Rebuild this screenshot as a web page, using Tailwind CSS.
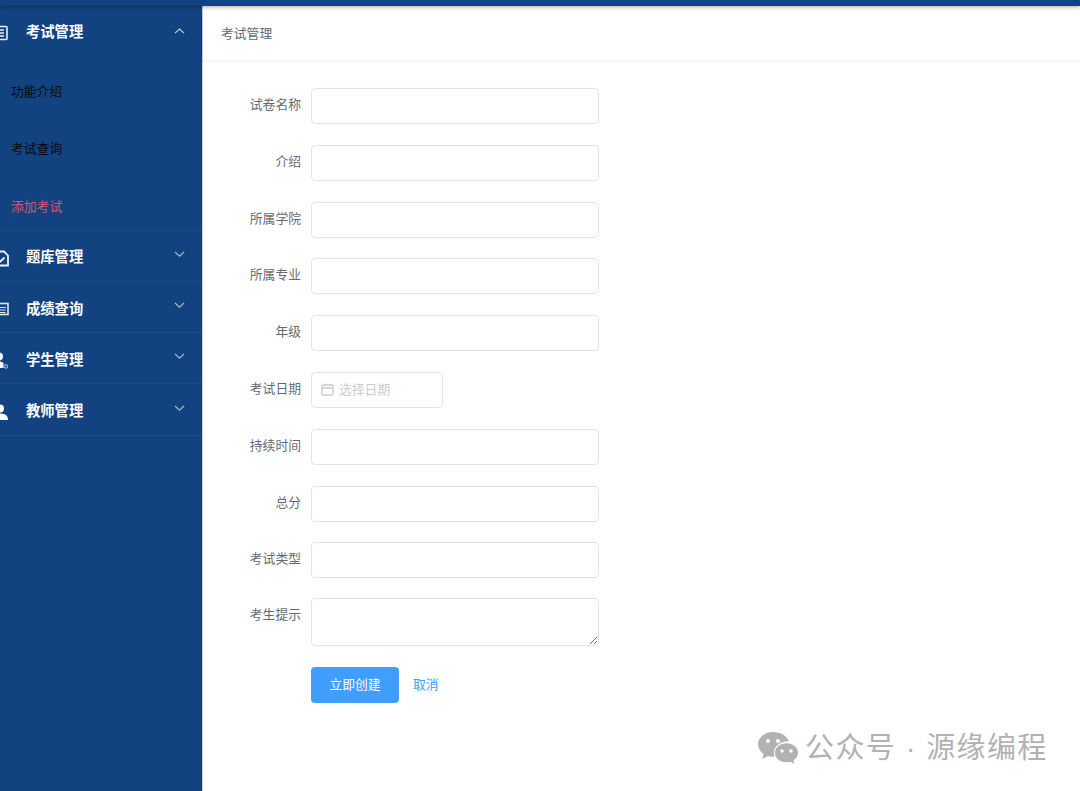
<!DOCTYPE html>
<html>

<head>
    <meta charset="utf-8" />
    <title>考试管理</title>
    <script src="https://cdn.jsdelivr.net/npm/@tailwindcss/browser@4"></script>
</head>

<body class="h-[791px] w-[1080px] overflow-hidden bg-white font-['Liberation_Sans','Noto_Sans_CJK_SC',sans-serif]">
    <!-- top bar, only its bottom edge is in the picture -->
    <div class="relative z-10 h-[6px] bg-[#12427f] shadow-[0_1px_4px_rgba(0,0,0,0.35)]"></div>

    <div class="flex h-[785px]">
        <!-- sidebar -->
        <aside class="w-[203px] shrink-0 overflow-hidden border-r border-[#c4cad3] bg-[#12427f] text-[14.3px] font-bold text-white">
            <div class="border-b border-[#174a8a]">
                <div class="flex h-[51px] items-center pt-[2px]">
                    <svg class="ml-[-8px] mr-[18px] h-4 w-4" viewBox="0 0 16 16" fill="none" stroke="#e8eef6" stroke-width="1.6">
                        <rect x="2" y="1.500" width="13" height="13" rx="1" />
                        <path d="M5 5h7M5 8h7M5 11h7" />
                    </svg>
                    <span>考试管理</span>
                    <svg class="ml-auto mr-[17px] h-[6px] w-[11px] -translate-y-[2px]" viewBox="0 0 11 6" fill="none" stroke="#c3cfdf" stroke-width="1.1">
                        <path d="M1 5.200 5.500 1 10 5.200" />
                    </svg>
                </div>
                <ul class="flex flex-col gap-[37.5px] pb-[13px] pl-[11px] pt-[24.5px] text-[12.8px] font-normal leading-5 text-[#050b14]">
                    <li>功能介绍</li>
                    <li>考试查询</li>
                    <li class="text-[#d9546f]">添加考试</li>
                </ul>
            </div>

            <div class="flex h-[51.3px] items-center border-b border-[#174a8a] pt-[5px]">
                <svg class="ml-[-7px] mr-[17px] h-[17px] w-4" viewBox="0 0 16 17" fill="none" stroke="#f0f4f9" stroke-width="1.8">
                    <path d="M2 1.500h9l4 4v10H2z" />
                    <path d="M5.500 9.500 7.500 11.500 11.500 7.500" />
                </svg>
                <span>题库管理</span>
                <svg class="ml-auto mr-[17px] h-[6px] w-[11px] -translate-y-1" viewBox="0 0 11 6" fill="none" stroke="#a9bad0" stroke-width="1.1">
                    <path d="M1 1 5.500 5.200 10 1" />
                </svg>
            </div>
            <div class="flex h-[51.3px] items-center border-b border-[#174a8a] pt-[5px]">
                <svg class="ml-[-7px] mr-[17px] h-4 w-4" viewBox="0 0 16 16" fill="none" stroke="#dfe7f1" stroke-width="1.6">
                    <rect x="1.500" y="2.500" width="13.500" height="11" />
                    <path d="M1 6.500h12M4 9h8.500M4 11.500h8.500" stroke-width="1" />
                </svg>
                <span>成绩查询</span>
                <svg class="ml-auto mr-[17px] h-[6px] w-[11px] -translate-y-1" viewBox="0 0 11 6" fill="none" stroke="#a9bad0" stroke-width="1.1">
                    <path d="M1 1 5.500 5.200 10 1" />
                </svg>
            </div>
            <div class="flex h-[51.3px] items-center border-b border-[#174a8a] pt-[4px]">
                <svg class="ml-[-8px] mr-[18px] h-[17px] w-4" viewBox="0 0 16 17" fill="#f2f5f9">
                    <circle cx="7" cy="4.500" r="4" />
                    <path d="M1 16c0-4.500 2.500-6.500 6-6.500 2 0 3.500.6 4.500 1.800V16z" />
                    <circle cx="14" cy="14.500" r="1.700" fill="none" stroke="#c9d5e4" stroke-width="1" />
                </svg>
                <span>学生管理</span>
                <svg class="ml-auto mr-[17px] h-[6px] w-[11px] -translate-y-1" viewBox="0 0 11 6" fill="none" stroke="#a9bad0" stroke-width="1.1">
                    <path d="M1 1 5.500 5.200 10 1" />
                </svg>
            </div>
            <div class="flex h-[51.3px] items-center border-b border-[#174a8a] pt-[5px]">
                <svg class="ml-[-8px] mr-[18px] h-4 w-4" viewBox="0 0 16 16" fill="#ffffff">
                    <circle cx="8" cy="4.500" r="4" />
                    <path d="M0 16c0-4.500 3-6.500 8-6.500s8 2 8 6.500z" />
                </svg>
                <span>教师管理</span>
                <svg class="ml-auto mr-[17px] h-[6px] w-[11px] -translate-y-1" viewBox="0 0 11 6" fill="none" stroke="#a9bad0" stroke-width="1.1">
                    <path d="M1 1 5.500 5.200 10 1" />
                </svg>
            </div>
        </aside>

        <!-- main content -->
        <main class="relative flex-1">
            <header class="flex h-[54px] items-center pl-[18px] pt-[2px] text-[12.8px] text-[#666a70] shadow-[0_1px_3px_rgba(0,0,0,0.07)]">
                考试管理
            </header>

            <form class="flex flex-col gap-[20.75px] pt-[28px] text-[12.8px] text-[#666a70]">
                <div class="flex h-9">
                    <label class="w-[98px] pt-[7px] text-right leading-5">试卷名称</label>
                    <input type="text" class="ml-[10px] h-9 w-[288px] rounded border border-[#e0e3e9] bg-white" />
                </div>
                <div class="flex h-9">
                    <label class="w-[98px] pt-[7px] text-right leading-5">介绍</label>
                    <input type="text" class="ml-[10px] h-9 w-[288px] rounded border border-[#e0e3e9] bg-white" />
                </div>
                <div class="flex h-9">
                    <label class="w-[98px] pt-[7px] text-right leading-5">所属学院</label>
                    <input type="text" class="ml-[10px] h-9 w-[288px] rounded border border-[#e0e3e9] bg-white" />
                </div>
                <div class="flex h-9">
                    <label class="w-[98px] pt-[7px] text-right leading-5">所属专业</label>
                    <input type="text" class="ml-[10px] h-9 w-[288px] rounded border border-[#e0e3e9] bg-white" />
                </div>
                <div class="flex h-9">
                    <label class="w-[98px] pt-[7px] text-right leading-5">年级</label>
                    <input type="text" class="ml-[10px] h-9 w-[288px] rounded border border-[#e0e3e9] bg-white" />
                </div>
                <div class="flex h-9">
                    <label class="w-[98px] pt-[7px] text-right leading-5">考试日期</label>
                    <div class="ml-[10px] flex h-9 w-[132px] items-center rounded border border-[#e0e3e9] bg-white pl-[9px] text-[#c8ccd4]">
                        <svg class="mr-[5px] h-[13px] w-[13px]" viewBox="0 0 13 13" fill="none" stroke="#c8ccd4" stroke-width="1.400">
                            <rect x="1" y="2" width="11" height="10" rx="1" />
                            <path d="M1 5h11M4 .5v2.500M9 .5v2.500" />
                        </svg>
                        选择日期
                    </div>
                </div>
                <div class="flex h-9">
                    <label class="w-[98px] pt-[7px] text-right leading-5">持续时间</label>
                    <input type="text" class="ml-[10px] h-9 w-[288px] rounded border border-[#e0e3e9] bg-white" />
                </div>
                <div class="mt-px mb-[-1px] flex h-9">
                    <label class="w-[98px] pt-[7px] text-right leading-5">总分</label>
                    <input type="text" class="ml-[10px] h-9 w-[288px] rounded border border-[#e0e3e9] bg-white" />
                </div>
                <div class="flex h-9">
                    <label class="w-[98px] pt-[7px] text-right leading-5">考试类型</label>
                    <input type="text" class="ml-[10px] h-9 w-[288px] rounded border border-[#e0e3e9] bg-white" />
                </div>
                <div class="mt-[-1px] flex h-[48px]">
                    <label class="w-[98px] pt-[7px] text-right leading-5">考生提示</label>
                    <textarea class="ml-[10px] h-[48px] w-[288px] rounded border border-[#e0e3e9] bg-white"></textarea>
                </div>
                <div class="flex h-9 items-center pl-[108px]">
                    <button type="button" class="h-9 w-[88px] rounded bg-[#409eff] text-white">立即创建</button>
                    <a class="ml-[14px] text-[#409eff]">取消</a>
                </div>
            </form>

            <!-- watermark sits over the page -->
            <div class="absolute left-[554px] top-[725px] flex items-center text-[#b2b2b2]">
                <svg class="h-[34px] w-[42px]" viewBox="0 0 42 34">
                    <path fill="#b2b2b2" d="M16 1C7.700 1 1 6.500 1 13.300c0 3.900 2.200 7.300 5.600 9.600L5.200 28l5.700-3c1.600.5 3.300.8 5.100.8.500 0 1 0 1.500-.1-.4-1.200-.6-2.400-.6-3.700 0-6.500 6.300-11.700 14-11.700h1C30 4.700 23.600 1 16 1z" />
                    <path fill="#b2b2b2" d="M41.500 21.800c0-5.500-5.500-10-12-10s-12 4.500-12 10 5.500 10 12 10c1.400 0 2.700-.2 4-.6l4.600 2.500-1.200-4.200c2.800-1.900 4.600-4.600 4.600-7.700z" stroke="#ffffff" stroke-width="1" />
                    <circle cx="11" cy="10" r="2" fill="#ffffff" />
                    <circle cx="21" cy="10" r="2" fill="#ffffff" />
                    <circle cx="25" cy="20" r="1.700" fill="#ffffff" />
                    <circle cx="34" cy="20" r="1.700" fill="#ffffff" />
                </svg>
                <span class="ml-[6px] whitespace-nowrap text-[29px] leading-[34px] tracking-[1.4px]">公众号 · 源缘编程</span>
            </div>
        </main>
    </div>
</body>

</html>
